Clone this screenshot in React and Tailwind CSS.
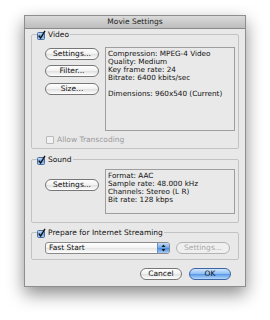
import { useState } from 'react'

// small aqua style checkbox, drawn as svg
function CheckBox({ checked, disabled }) {
  if (disabled) {
    return (
      <span className="inline-block w-[8px] h-[8px] border border-[#b9b9b9] rounded-[1px] bg-[#f2f2f2] shrink-0" />
    )
  }
  return (
    <svg width="9" height="10" viewBox="0 0 9 10" className="shrink-0">
      <defs>
        <linearGradient id="cb" x1="0" y1="0" x2="0" y2="1">
          <stop offset="0" stopColor="#cfe3fb" />
          <stop offset="0.5" stopColor="#6fa6e8" />
          <stop offset="1" stopColor="#a9cdf6" />
        </linearGradient>
      </defs>
      <rect x="0.5" y="2.5" width="7" height="7" rx="1" fill={checked ? 'url(#cb)' : '#fff'} stroke="#4a6d9e" />
      {checked && <path d="M1.8 5.6 L3.6 8 L8 0.8" fill="none" stroke="#111" strokeWidth="1.4" />}
    </svg>
  )
}

function Button({ children, className = '' }) {
  return (
    <button
      className={`h-[12px] rounded-full border border-[#777] bg-[linear-gradient(#ffffff,#f1f1f1_50%,#e2e2e2_55%,#ffffff)] text-[7.5px] leading-[10px] text-[#111] ${className}`}
    >
      {children}
    </button>
  )
}

function Group({ label, children, className = '' }) {
  const [on, setOn] = useState(true)
  return (
    <fieldset className={`border border-[#c2c2c2] rounded-[2px] ${className}`}>
      <legend
        onClick={() => setOn(!on)}
        className="ml-[5px] pr-[1px] flex items-center gap-[2px] h-[9px] text-[7.5px] leading-[9px] text-[#111] cursor-default"
      >
        <CheckBox checked={on} />
        {label}
      </legend>
      {children}
    </fieldset>
  )
}

function InfoBox({ lines, className = '' }) {
  return (
    <div className={`w-[130px] border border-[#9e9e9e] bg-[#e9e9e9] px-[2px] pt-[1.5px] text-[7.25px] leading-[8.1px] text-[#111] ${className}`}>
      {lines.map((l, i) => (
        <div key={i} className="h-[8.1px] whitespace-nowrap">{l}</div>
      ))}
    </div>
  )
}

export default function App() {
  return (
    <div className="w-[270px] h-[320px] bg-white pt-[15px] pl-[24px] font-['DejaVu_Sans',sans-serif]">
      <div className="w-[222px] h-[272px] bg-[#e8e8e8] border border-[#8e8e8e] shadow-[0_7px_16px_rgba(0,0,0,0.45)] flex flex-col">
        <div className="h-[13px] shrink-0 bg-[linear-gradient(#dadada,#bdbdbd)] border-b border-[#8a8a8a] text-center text-[7.5px] leading-[12px] text-[#222]">
          Movie Settings
        </div>

        <div className="px-[6px] pt-[1px] flex flex-col">
          <Group label="Video" className="pb-[4px]">
            <div className="flex">
              <div className="flex flex-col pl-[13px] pt-[9px]">
                <Button className="w-[54px]">Settings...</Button>
                <Button className="w-[54px] mt-[5px]">Filter...</Button>
                <Button className="w-[54px] mt-[6px]">Size...</Button>
              </div>
              <InfoBox
                className="ml-auto mr-[3px] mt-[8px] h-[84px]"
                lines={[
                  'Compression: MPEG-4 Video',
                  'Quality: Medium',
                  'Key frame rate: 24',
                  'Bitrate: 6400 kbits/sec',
                  '',
                  'Dimensions: 960x540 (Current)',
                ]}
              />
            </div>
            <div className="flex items-center gap-[3px] pl-[14px] mt-[5px] h-[8px] text-[7.5px] text-[#9a9a9a]">
              <CheckBox disabled />
              Allow Transcoding
            </div>
          </Group>

          <Group label="Sound" className="mt-[6px] pb-[8px]">
            <div className="flex">
              <div className="pl-[13px] pt-[6px]">
                <Button className="w-[54px]">Settings...</Button>
              </div>
              <InfoBox
                className="ml-auto mr-[3px] mt-[5px] h-[45px]"
                lines={['Format: AAC', 'Sample rate: 48.000 kHz', 'Channels: Stereo (L R)', 'Bit rate: 128 kbps']}
              />
            </div>
          </Group>

          <Group label="Prepare for Internet Streaming" className="mt-[5px] pb-[5px]">
            <div className="flex items-center pl-[13px] pt-[5px]">
              <div className="w-[125px] h-[12px] flex rounded-[3px] border border-[#8a8a8a] bg-[linear-gradient(#ffffff,#f3f3f3_50%,#e6e6e6_55%,#ffffff)] overflow-hidden">
                <span className="flex-1 pl-[3px] text-[7.5px] leading-[10px] text-[#111]">Fast Start</span>
                <span className="w-[12px] border-l border-[#6a8fc2] bg-[linear-gradient(#c4dcf8,#6ea6ea_50%,#4f8fe0_55%,#a8ccf5)] flex flex-col items-center justify-center gap-[1px]">
                  <svg width="5" height="8" viewBox="0 0 5 8">
                    <path d="M2.5 0.5 L4.5 3 L0.5 3 Z M2.5 7.5 L4.5 5 L0.5 5 Z" fill="#1a1a1a" />
                  </svg>
                </span>
              </div>
              <button className="ml-[6px] w-[54px] h-[12px] rounded-full border border-[#b4b4b4] bg-[#efefef] text-[7.5px] leading-[10px] text-[#a8a8a8]">
                Settings...
              </button>
            </div>
          </Group>

          <div className="flex justify-end gap-[7px] mt-[8px] pr-[8px]">
            <Button className="w-[42px]">Cancel</Button>
            <button className="w-[42px] h-[12px] rounded-full border border-[#3d64a5] bg-[linear-gradient(#d2e6fc,#8dbdf3_50%,#5d9be8_55%,#b7d9fa)] text-[7.5px] leading-[10px] text-[#111]">
              OK
            </button>
          </div>
        </div>
      </div>
    </div>
  )
}
